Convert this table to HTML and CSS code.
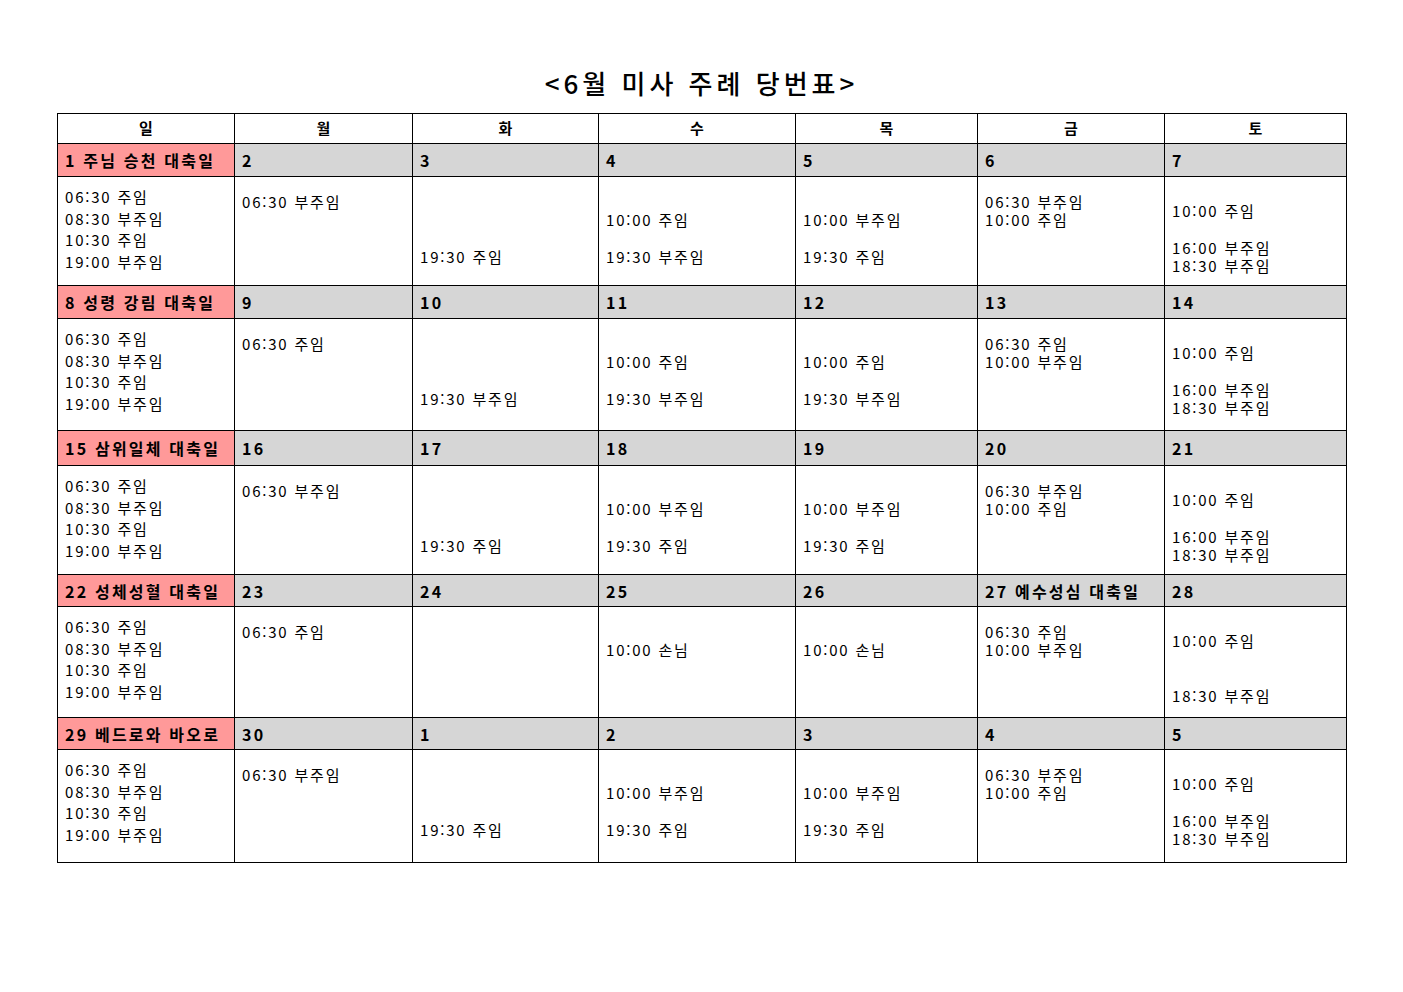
FILE: index.html
```html
<!DOCTYPE html>
<html lang="ko">
<head>
<meta charset="utf-8">
<title>6월 미사 주례 당번표</title>
<link rel="stylesheet" href="styles.css">
</head>
<body>
<div class="page">
  <h1 class="title">&lt;6월 미사 주례 당번표&gt;</h1>
  <table class="cal">
    <colgroup>
      <col class="c1"><col class="c2"><col class="c3"><col class="c4"><col class="c5"><col class="c6"><col class="c7">
    </colgroup>
    <tr class="head">
      <th>일</th><th>월</th><th>화</th><th>수</th><th>목</th><th>금</th><th>토</th>
    </tr>

    <tr class="date d1">
      <td class="feast">1 주님 승천 대축일</td><td>2</td><td>3</td><td>4</td><td>5</td><td>6</td><td>7</td>
    </tr>
    <tr class="body r1">
      <td class="sun"><div>06:30 주임</div><div>08:30 부주임</div><div>10:30 주임</div><div>19:00 부주임</div></td>
      <td><div>06:30 부주임</div></td>
      <td><div>&nbsp;</div><div>&nbsp;</div><div>&nbsp;</div><div>19:30 주임</div></td>
      <td><div>&nbsp;</div><div>10:00 주임</div><div>&nbsp;</div><div>19:30 부주임</div></td>
      <td><div>&nbsp;</div><div>10:00 부주임</div><div>&nbsp;</div><div>19:30 주임</div></td>
      <td><div>06:30 부주임</div><div>10:00 주임</div></td>
      <td class="sat"><div>10:00 주임</div><div>&nbsp;</div><div>16:00 부주임</div><div>18:30 부주임</div></td>
    </tr>

    <tr class="date d2">
      <td class="feast">8 성령 강림 대축일</td><td>9</td><td>10</td><td>11</td><td>12</td><td>13</td><td>14</td>
    </tr>
    <tr class="body r2">
      <td class="sun"><div>06:30 주임</div><div>08:30 부주임</div><div>10:30 주임</div><div>19:00 부주임</div></td>
      <td><div>06:30 주임</div></td>
      <td><div>&nbsp;</div><div>&nbsp;</div><div>&nbsp;</div><div>19:30 부주임</div></td>
      <td><div>&nbsp;</div><div>10:00 주임</div><div>&nbsp;</div><div>19:30 부주임</div></td>
      <td><div>&nbsp;</div><div>10:00 주임</div><div>&nbsp;</div><div>19:30 부주임</div></td>
      <td><div>06:30 주임</div><div>10:00 부주임</div></td>
      <td class="sat"><div>10:00 주임</div><div>&nbsp;</div><div>16:00 부주임</div><div>18:30 부주임</div></td>
    </tr>

    <tr class="date d3">
      <td class="feast">15 삼위일체 대축일</td><td>16</td><td>17</td><td>18</td><td>19</td><td>20</td><td>21</td>
    </tr>
    <tr class="body r3">
      <td class="sun"><div>06:30 주임</div><div>08:30 부주임</div><div>10:30 주임</div><div>19:00 부주임</div></td>
      <td><div>06:30 부주임</div></td>
      <td><div>&nbsp;</div><div>&nbsp;</div><div>&nbsp;</div><div>19:30 주임</div></td>
      <td><div>&nbsp;</div><div>10:00 부주임</div><div>&nbsp;</div><div>19:30 주임</div></td>
      <td><div>&nbsp;</div><div>10:00 부주임</div><div>&nbsp;</div><div>19:30 주임</div></td>
      <td><div>06:30 부주임</div><div>10:00 주임</div></td>
      <td class="sat"><div>10:00 주임</div><div>&nbsp;</div><div>16:00 부주임</div><div>18:30 부주임</div></td>
    </tr>

    <tr class="date d4">
      <td class="feast">22 성체성혈 대축일</td><td>23</td><td>24</td><td>25</td><td>26</td><td>27 예수성심 대축일</td><td>28</td>
    </tr>
    <tr class="body r4">
      <td class="sun"><div>06:30 주임</div><div>08:30 부주임</div><div>10:30 주임</div><div>19:00 부주임</div></td>
      <td><div>06:30 주임</div></td>
      <td></td>
      <td><div>&nbsp;</div><div>10:00 손님</div></td>
      <td><div>&nbsp;</div><div>10:00 손님</div></td>
      <td><div>06:30 주임</div><div>10:00 부주임</div></td>
      <td class="sat"><div>10:00 주임</div><div>&nbsp;</div><div>&nbsp;</div><div>18:30 부주임</div></td>
    </tr>

    <tr class="date d5">
      <td class="feast">29 베드로와 바오로</td><td>30</td><td>1</td><td>2</td><td>3</td><td>4</td><td>5</td>
    </tr>
    <tr class="body r5">
      <td class="sun"><div>06:30 주임</div><div>08:30 부주임</div><div>10:30 주임</div><div>19:00 부주임</div></td>
      <td><div>06:30 부주임</div></td>
      <td><div>&nbsp;</div><div>&nbsp;</div><div>&nbsp;</div><div>19:30 주임</div></td>
      <td><div>&nbsp;</div><div>10:00 부주임</div><div>&nbsp;</div><div>19:30 주임</div></td>
      <td><div>&nbsp;</div><div>10:00 부주임</div><div>&nbsp;</div><div>19:30 주임</div></td>
      <td><div>06:30 부주임</div><div>10:00 주임</div></td>
      <td class="sat"><div>10:00 주임</div><div>&nbsp;</div><div>16:00 부주임</div><div>18:30 부주임</div></td>
    </tr>
  </table>
</div>
</body>
</html>
```

FILE: styles.css
```css
html, body {
  margin: 0;
  padding: 0;
  background: #ffffff;
}
body {
  font-family: "Noto Sans CJK KR", "Noto Sans", sans-serif;
  color: #000000;
}
.page {
  padding: 65px 0 0 57px;
  width: 1289px;
}
.title {
  margin: 0 0 12px 0;
  text-align: center;
  font-size: 26px;
  line-height: 36px;
  font-weight: 500;
  letter-spacing: 4px;
}
.cal {
  border-collapse: collapse;
  table-layout: fixed;
  width: 1289px;
}
.c1 { width: 177px; }
.c2 { width: 178px; }
.c3 { width: 186px; }
.c4 { width: 197px; }
.c5 { width: 182px; }
.c6 { width: 187px; }
.c7 { width: 182px; }
.cal th, .cal td {
  border: 1px solid #000000;
  padding: 0 0 0 7px;
  text-align: left;
  white-space: nowrap;
}
.head th {
  height: 30px;
  padding: 0 0 2px 0;
  box-sizing: border-box;
  text-align: center;
  font-size: 15px;
  font-weight: 700;
  line-height: 20px;
}
.date td {
  background: #d6d6d6;
  font-size: 16px;
  font-weight: 700;
  letter-spacing: 2.2px;
  line-height: 20px;
  vertical-align: middle;
}
.d1 td { height: 32px; }
.d2 td { height: 32px; }
.d3 td { height: 34px; }
.d4 td { height: 31px; }
.d5 td { height: 31px; }
.date td.feast {
  background: #ff9999;
}
.body td {
  vertical-align: top;
  padding-top: 16px;
  font-size: 15px;
  letter-spacing: 1.8px;
  line-height: 18.4px;
  box-sizing: border-box;
}
.body td.sun {
  padding-top: 9px;
  line-height: 21.6px;
}
.body td.sat {
  padding-top: 25px;
}
.r1 td { height: 109px; }
.r2 td { height: 112px; }
.r3 td { height: 109px; }
.r4 td { height: 111px; }
.r5 td { height: 113px; }
```
